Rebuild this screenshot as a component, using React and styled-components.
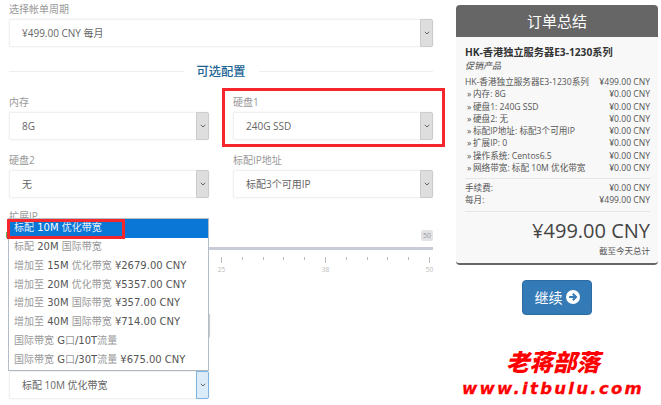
import React from "react";
import styled, { createGlobalStyle } from "styled-components";

const Global = createGlobalStyle`
  html, body { margin: 0; padding: 0; background: #fff; }
  body { font-family: "Open Sans", "Noto Sans CJK SC", sans-serif; color: #555; overflow: hidden; }
  * { box-sizing: border-box; }
`;

const Page = styled.div`
  position: relative;
  width: 661px;
  height: 405px;
  overflow: hidden;
  display: grid;
  grid-template-columns: 456px 205px;
`;

const Left = styled.div`
  padding: 2px 23px 0 9px;
`;

const Right = styled.div`
  padding: 5px 0 0 0;
  width: 202px;
  display: flex;
  flex-direction: column;
  align-items: center;
`;

const Label = styled.div`
  font-size: 10px;
  line-height: 14px;
  color: #999;
  margin-bottom: 3px;
`;

const SliderLabel = styled(Label)`
  margin-top: -2px;
`;

const Row = styled.div`
  display: grid;
  grid-template-columns: 200px 200px;
  column-gap: 24px;
  margin-bottom: 13px;
`;

const Field = styled.div``;

const Select = styled.div`
  display: flex;
  height: 28px;
  background: #fff;
  border: 1px solid #f0f0f0;
  border-radius: 2px;
  font-size: 10px;
  color: #666;
  box-shadow: 0 0 2px rgba(0, 0, 0, 0.08);
`;

const SelectText = styled.div`
  flex: 1;
  padding-left: 12px;
  line-height: 26px;
`;

const Arrow = styled.div`
  width: 13px;
  margin: -1px;
  background: ${(p) => (p.$active ? "#dcebf8" : "#dedede")};
  border: 1px solid ${(p) => (p.$active ? "#7fb4e0" : "#ccc")};
  border-radius: 0 2px 2px 0;
  display: flex;
  align-items: center;
  justify-content: center;
`;

const Chevron = () => (
  <svg width="6" height="4" viewBox="0 0 6 4">
    <path d="M0.8 0.8L3 3L5.2 0.8" fill="none" stroke="#555" strokeWidth="0.9" />
  </svg>
);

const Heading = styled.div`
  display: flex;
  align-items: center;
  gap: 13px;
  height: 20px;
  margin: 14px 0 14px;
  font-size: 12.25px;
  font-weight: 500;
  color: #1c6494;
  &::before, &::after {
    content: "";
    flex: 1;
    height: 1px;
    background: #eee;
  }
`;

const SliderArea = styled.div`
  height: 60px;
  position: relative;
`;

const Handle = styled.div`
  position: absolute;
  left: -3px;
  top: 6px;
  width: 3px;
  height: 6px;
  background: #5cb85c;
`;

const SliderValue = styled.div`
  position: absolute;
  right: 0;
  top: 4px;
  width: 12px;
  height: 11px;
  background: #e3e3e6;
  border-radius: 2px;
  font-size: 7px;
  line-height: 11px;
  text-align: center;
  color: #999;
`;

const Track = styled.div`
  position: absolute;
  left: 0;
  right: 0;
  top: 21px;
  height: 3px;
  background: #c9ccd6;
`;

const Ticks = styled.div`
  position: absolute;
  top: 31px;
  left: 212px;
  right: 3px;
  display: flex;
  justify-content: space-between;
`;

const Tick = styled.span`
  width: 1px;
  height: ${(p) => (p.$major ? 6 : 3)}px;
  background: #bbb;
`;

const Scale = styled.div`
  position: absolute;
  top: 39px;
  left: 212px;
  right: 3px;
  display: flex;
  justify-content: space-between;
  font-size: 6.5px;
  line-height: 9px;
  color: #bbb;
`;

const ScaleMark = styled.span`
  width: 1px;
  display: flex;
  justify-content: center;
`;

const HiddenSelect = styled(Select)`
  position: absolute;
  left: 9px;
  top: 313px;
  width: 201px;
  height: 25px;
`;

const Dropdown = styled.div`
  position: absolute;
  left: 8px;
  top: 218px;
  width: 201px;
  background: #fff;
  border: 1px solid #b4bcc6;
`;

const Option = styled.div`
  height: 18.85px;
  line-height: 18.85px;
  padding-left: 5px;
  white-space: nowrap;
  font-family: "DejaVu Sans", "Noto Sans CJK SC", sans-serif;
  font-size: 10px;
  background: ${(p) => (p.$selected ? "#0a76d6" : "transparent")};
  color: ${(p) => (p.$selected ? "#fff" : "#555")};
`;

const OptionCjk = styled.span`
  color: ${(p) => (p.$selected ? "#e6f0fa" : "#999")};
`;

const Highlight = styled.div`
  position: absolute;
  border: 3px solid #f5262c;
  left: ${(p) => p.$x}px;
  top: ${(p) => p.$y}px;
  width: ${(p) => p.$w}px;
  height: ${(p) => p.$h}px;
`;

const BottomSelect = styled(Select)`
  position: absolute;
  left: 9px;
  top: 371px;
  width: 200px;
`;

const Panel = styled.div`
  width: 202px;
  background: #f8f8f8;
  border-radius: 4px;
  border-bottom: 2px solid #666;
`;

const PanelHead = styled.div`
  height: 32px;
  background: #666;
  border-radius: 4px 4px 0 0;
  color: #fff;
  font-size: 15px;
  line-height: 32px;
  text-align: center;
`;

const PanelBody = styled.div`
  padding: 8px 8px 5px 9px;
  font-size: 8.6px;
  color: #555;
`;

const Product = styled.div`
  font-size: 10.2px;
  font-weight: 700;
  line-height: 14px;
  color: #333;
`;

const Group = styled.div`
  font-size: 9px;
  font-style: italic;
  line-height: 14px;
  color: #555;
  margin-bottom: 3px;
`;

const Line = styled.div`
  display: flex;
  justify-content: space-between;
  line-height: 12.25px;
  white-space: nowrap;
  padding-left: ${(p) => (p.$sub ? 2 : 0)}px;
`;

const Mark = styled.span`
  display: inline-block;
  width: 6px;
`;

const Sep = styled.div`
  height: 1px;
  background: #e6e6e6;
  margin: ${(p) => p.$m};
`;

const Total = styled.div`
  font-size: 20px;
  line-height: 26px;
  text-align: right;
  color: #444;
`;

const Note = styled.div`
  text-align: right;
  line-height: 14px;
  font-size: 8.5px;
`;

const Continue = styled.button`
  margin-top: 15px;
  width: 70px;
  height: 35px;
  background: #337ab7;
  border: 1px solid #2e6da4;
  border-radius: 4px;
  color: #fff;
  font-family: inherit;
  font-size: 14px;
  display: flex;
  align-items: center;
  justify-content: center;
  gap: 3px;
  padding: 0;
`;

const Brand = styled.div`
  margin-top: 34px;
  padding-right: 8px;
  text-align: center;
  color: #f00;
  font-family: "Noto Sans CJK SC", sans-serif;
  font-weight: 900;
  font-style: italic;
  font-size: 23.5px;
  line-height: 24px;
`;

const BrandUrl = styled.div`
  margin-top: 8px;
  padding-right: 8px;
  text-align: center;
  color: #f00;
  font-family: "DejaVu Sans", sans-serif;
  font-weight: 700;
  font-style: italic;
  font-size: 16.5px;
  letter-spacing: 2.3px;
  line-height: 16px;
  white-space: nowrap;
  -webkit-text-stroke: 0.3px #f00;
`;

const items = [
  ["内存: 8G", "¥0.00 CNY"],
  ["硬盘1: 240G SSD", "¥0.00 CNY"],
  ["硬盘2: 无", "¥0.00 CNY"],
  ["标配IP地址: 标配3个可用IP", "¥0.00 CNY"],
  ["扩展IP: 0", "¥0.00 CNY"],
  ["操作系统: Centos6.5", "¥0.00 CNY"],
  ["网络带宽: 标配 10M 优化带宽", "¥0.00 CNY"],
];

const options = [
  "标配 10M 优化带宽",
  "标配 20M 国际带宽",
  "增加至 15M 优化带宽 ¥2679.00 CNY",
  "增加至 20M 优化带宽 ¥5357.00 CNY",
  "增加至 30M 国际带宽 ¥357.00 CNY",
  "增加至 40M 国际带宽 ¥714.00 CNY",
  "国际带宽 G口/10T流量",
  "国际带宽 G口/30T流量 ¥675.00 CNY",
];

const SelectBox = ({ children }) => (
  <Select>
    <SelectText>{children}</SelectText>
    <Arrow>
      <Chevron />
    </Arrow>
  </Select>
);

// CJK in the open list renders paler than the latin text
const OptionText = ({ text, selected }) =>
  text.split(/([\u4e00-\u9fff]+)/).map((part, i) =>
    i % 2 ? (
      <OptionCjk key={i} $selected={selected}>
        {part}
      </OptionCjk>
    ) : (
      part
    )
  );

const App = () => {
  const ticks = Array.from({ length: 11 }, (_, i) => i);
  return (
    <Page>
      <Global />
      <Left>
        <Label>选择帐单周期</Label>
        <SelectBox>¥499.00 CNY 每月</SelectBox>
        <Heading>可选配置</Heading>
        <Row>
          <Field>
            <Label>内存</Label>
            <SelectBox>8G</SelectBox>
          </Field>
          <Field>
            <Label>硬盘1</Label>
            <SelectBox>240G SSD</SelectBox>
          </Field>
        </Row>
        <Row>
          <Field>
            <Label>硬盘2</Label>
            <SelectBox>无</SelectBox>
          </Field>
          <Field>
            <Label>标配IP地址</Label>
            <SelectBox>标配3个可用IP</SelectBox>
          </Field>
        </Row>
        <SliderLabel>扩展IP</SliderLabel>
        <SliderArea>
          <Handle />
          <SliderValue>50</SliderValue>
          <Track />
          <Ticks>
            {ticks.map((t) => (
              <Tick key={t} $major={t % 5 === 0} />
            ))}
          </Ticks>
          <Scale>
            <ScaleMark>25</ScaleMark>
            <ScaleMark>38</ScaleMark>
            <ScaleMark>50</ScaleMark>
          </Scale>
        </SliderArea>
      </Left>
      <Right>
        <Panel>
          <PanelHead>订单总结</PanelHead>
          <PanelBody>
            <Product>HK-香港独立服务器E3-1230系列</Product>
            <Group>促销产品</Group>
            <Line>
              <span>HK-香港独立服务器E3-1230系列</span>
              <span>¥499.00 CNY</span>
            </Line>
            {items.map(([name, price]) => (
              <Line key={name} $sub>
                <span>
                  <Mark>»</Mark>
                  {name}
                </span>
                <span>{price}</span>
              </Line>
            ))}
            <Sep $m="4px 0 3px" />
            <Line>
              <span>手续费:</span>
              <span>¥0.00 CNY</span>
            </Line>
            <Line>
              <span>每月:</span>
              <span>¥499.00 CNY</span>
            </Line>
            <Sep $m="4px 0 6px" />
            <Total>¥499.00 CNY</Total>
            <Note>截至今天总计</Note>
          </PanelBody>
        </Panel>
        <Continue>
          继续
          <svg width="14" height="14" viewBox="0 0 14 14">
            <circle cx="7" cy="7" r="7" fill="#fff" />
            <path d="M3.2 7h6.6M6.8 3.8L10 7l-3.2 3.2" fill="none" stroke="#337ab7" strokeWidth="2" />
          </svg>
        </Continue>
        <Brand>老蒋部落</Brand>
        <BrandUrl>www.itbulu.com</BrandUrl>
      </Right>
      <HiddenSelect>
        <SelectText />
        <Arrow />
      </HiddenSelect>
      <Dropdown>
        {options.map((o, i) => (
          <Option key={o} $selected={i === 0}>
            <OptionText text={o} selected={i === 0} />
          </Option>
        ))}
      </Dropdown>
      <BottomSelect>
        <SelectText>标配 10M 优化带宽</SelectText>
        <Arrow $active>
          <Chevron />
        </Arrow>
      </BottomSelect>
      <Highlight $x={222} $y={88} $w={223} $h={59} />
      <Highlight $x={7} $y={219} $w={118} $h={20} />
    </Page>
  );
};

export default App;
